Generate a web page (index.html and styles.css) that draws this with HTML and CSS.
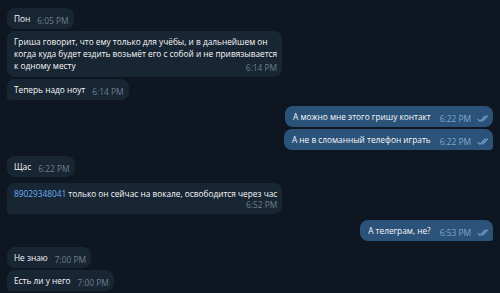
FILE: index.html
```html
<!DOCTYPE html>
<html lang="ru">
<head>
<meta charset="utf-8">
<link rel="stylesheet" href="styles.css">
</head>
<body>
<div class="chat">
  <div class="msg in"><div class="bubble"><span class="text">Пон</span><span class="time">6:05 PM</span></div></div>
  <div class="msg in near"><div class="bubble multi"><span class="text">Гриша говорит, что ему только для учёбы, и в дальнейшем он<br>когда куда будет ездить возьмёт его с собой и не привязывается<br>к одному месту</span><span class="time overlap">6:14 PM</span></div></div>
  <div class="msg in near"><div class="bubble last"><span class="text">Теперь надо ноут</span><span class="time">6:14 PM</span></div></div>

  <div class="msg out"><div class="bubble"><span class="text">А можно мне этого гришу контакт</span><span class="time">6:22 PM</span><svg class="check" viewBox="0 0 13 7" width="13" height="7"><path d="M0.8 4.2 L3 6.3 L8.6 0.7 M5.2 6.3 L11 0.7"/></svg></div></div>
  <div class="msg out near"><div class="bubble last"><span class="text">А не в сломанный телефон играть</span><span class="time">6:22 PM</span><svg class="check" viewBox="0 0 13 7" width="13" height="7"><path d="M0.8 4.2 L3 6.3 L8.6 0.7 M5.2 6.3 L11 0.7"/></svg></div></div>

  <div class="msg in"><div class="bubble"><span class="text">Щас</span><span class="time">6:22 PM</span></div></div>
  <div class="msg in"><div class="bubble multi last"><span class="text"><span class="link">89029348041</span> только он сейчас на вокале, освободится через час</span><span class="time">6:52 PM</span></div></div>

  <div class="msg out"><div class="bubble last"><span class="text">А телеграм, не?</span><span class="time">6:53 PM</span><svg class="check" viewBox="0 0 13 7" width="13" height="7"><path d="M0.8 4.2 L3 6.3 L8.6 0.7 M5.2 6.3 L11 0.7"/></svg></div></div>

  <div class="msg in"><div class="bubble"><span class="text">Не знаю</span><span class="time">7:00 PM</span></div></div>
  <div class="msg in near"><div class="bubble last"><span class="text">Есть ли у него</span><span class="time">7:00 PM</span></div></div>
</div>
</body>
</html>
```

FILE: styles.css
```css
html, body {
  margin: 0;
  padding: 0;
  background: #0e1621;
  height: 100%;
  overflow: hidden;
}

.chat {
  display: flex;
  flex-direction: column;
  padding: 8px 7px 0 7px;
  font-family: "Open Sans", Roboto, sans-serif;
  font-size: 8.3px;
  line-height: 12px;
  color: #f7f8f9;
}

.msg {
  display: flex;
  margin-top: 6px;
}
.msg:first-child { margin-top: 0; }
.msg.near { margin-top: 2px; }
.msg.in { justify-content: flex-start; }
.msg.out { justify-content: flex-end; }

.bubble {
  display: flex;
  align-items: baseline;
  white-space: nowrap;
  padding: 4.5px 5px 4.5px 7px;
  border-radius: 8px;
  background: #182533;
}
.out .bubble {
  background: #2b5278;
  padding-left: 8px;
  padding-right: 3px;
}
.in .bubble.last { border-bottom-left-radius: 3px; }
.out .bubble.last { border-bottom-right-radius: 3px; }

.bubble.multi {
  flex-direction: column;
  align-items: stretch;
}

.time {
  margin-left: 7px;
  font-size: 8.4px;
  line-height: 10px;
  color: #6d7f8f;
  position: relative;
  top: 2px;
}
.out .time { color: #7da8d3; margin-left: 9px; }

.multi .time {
  align-self: flex-end;
  margin-left: 0;
  top: 0;
  margin-top: 0;
}
.multi .time.overlap { margin-top: -9px; }

.link { color: #6ab3f3; }

.check {
  margin-left: 6px;
  align-self: center;
  position: relative;
  top: 2px;
}
.check path {
  fill: none;
  stroke: #7da8d3;
  stroke-width: 1.1;
}
```
